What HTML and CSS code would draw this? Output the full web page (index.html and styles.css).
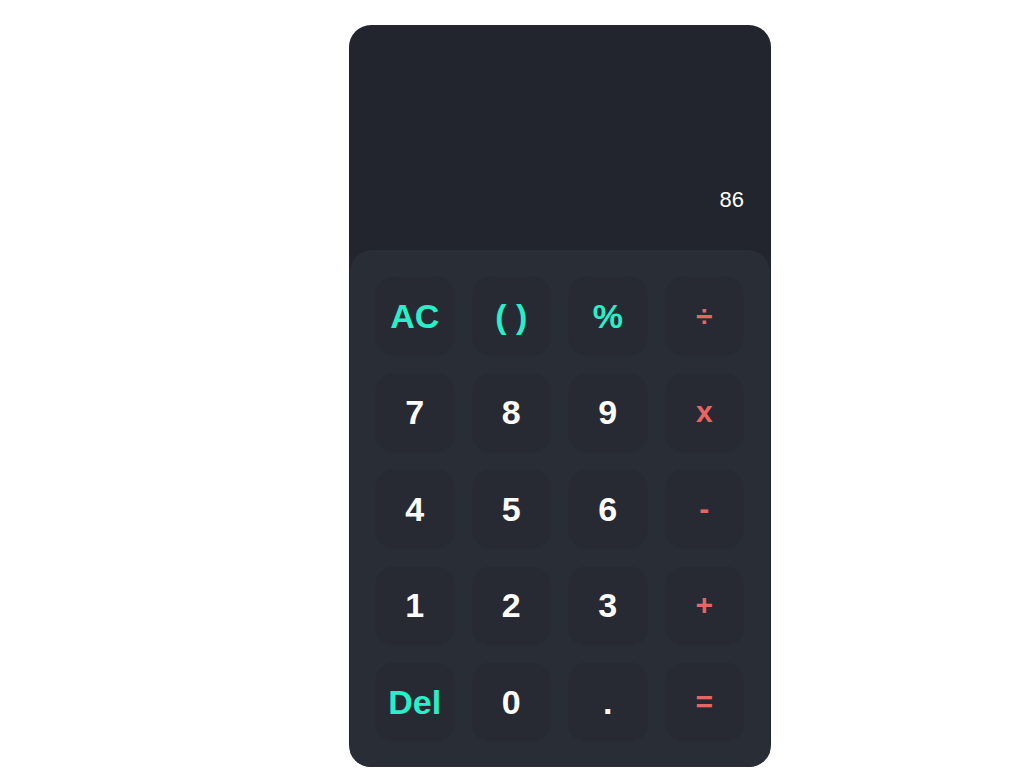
FILE: index.html
```html
<!DOCTYPE html>
<html lang="en">
<head>
<meta charset="utf-8">
<title>Calculator</title>
<link rel="stylesheet" href="styles.css">
</head>
<body>
<main class="page">
  <div class="calculator">
    <div class="display">
      <div class="result">86</div>
    </div>
    <div class="keypad">
      <button class="key key-func">AC</button>
      <button class="key key-func">( )</button>
      <button class="key key-func">%</button>
      <button class="key key-op">÷</button>
      <button class="key">7</button>
      <button class="key">8</button>
      <button class="key">9</button>
      <button class="key key-op">x</button>
      <button class="key">4</button>
      <button class="key">5</button>
      <button class="key">6</button>
      <button class="key key-op">-</button>
      <button class="key">1</button>
      <button class="key">2</button>
      <button class="key">3</button>
      <button class="key key-op">+</button>
      <button class="key key-func">Del</button>
      <button class="key">0</button>
      <button class="key">.</button>
      <button class="key key-op">=</button>
    </div>
  </div>
</main>
</body>
</html>
```
FILE: styles.css
```css
* { box-sizing: border-box; }
html, body { margin: 0; padding: 0; background: #ffffff; }
body { font-family: "Liberation Sans", Arial, sans-serif; }

.page {
  padding: 25px 0 0 349px;
}

.calculator {
  width: 422px;
  height: 742px;
  background: #22252d;
  border-radius: 22px;
  overflow: hidden;
  display: flex;
  flex-direction: column;
}

.display {
  height: 225px;
  display: flex;
  align-items: flex-end;
  justify-content: flex-end;
  padding: 0 27px 37px 0;
}

.result {
  color: #ffffff;
  font-size: 22px;
  line-height: 26px;
}

.keypad {
  flex: 1;
  margin: 0 1px;
  background: #292d36;
  border-radius: 22px 22px 0 0;
  padding: 27px 27px 27px 26px;
  display: grid;
  grid-template-columns: repeat(4, 1fr);
  grid-auto-rows: 77px;
  column-gap: 19px;
  row-gap: 19.5px;
}

.key {
  border: none;
  margin: 0;
  padding: 0;
  background: #272a32;
  border-radius: 18px;
  color: #ffffff;
  font-family: "Liberation Sans", Arial, sans-serif;
  font-weight: bold;
  font-size: 34px;
  line-height: 1;
  display: flex;
  align-items: center;
  justify-content: center;
  box-shadow: 0 1px 3px rgba(0, 0, 0, 0.08);
}

.key-func { color: #29efc9; }
.key-op { color: #eb6464; font-size: 30px; }
```
